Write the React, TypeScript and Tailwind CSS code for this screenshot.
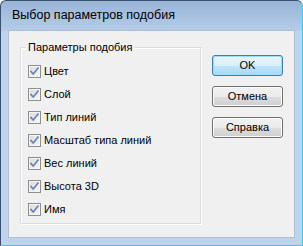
import React from "react";

const items = ["Цвет", "Слой", "Тип линий", "Масштаб типа линий", "Вес линий", "Высота 3D", "Имя"];

function Check() {
  return (
    <svg width="13" height="13" viewBox="0 0 13 13" className="shrink-0">
      <defs>
        <linearGradient id="cbg" x1="0" y1="0" x2="1" y2="1">
          <stop offset="0" stopColor="#dcdcdc" />
          <stop offset="1" stopColor="#f6f6f6" />
        </linearGradient>
      </defs>
      <rect x="0.5" y="0.5" width="12" height="12" fill="#f4f4f4" stroke="#8f8f8f" />
      <rect x="2" y="2" width="9" height="9" fill="url(#cbg)" />
      <path d="M3 6.5 L5.2 9 L10 3" fill="none" stroke="#6382bd" strokeWidth="1.6" strokeLinecap="square" />
    </svg>
  );
}

function Btn({ label, def }: { label: string; def?: boolean }) {
  return (
    <div
      className={
        "w-[71px] h-[21px] rounded-[3px] border flex items-center justify-center text-[11px] text-black " +
        (def
          ? "border-[#3c7fb1] bg-[linear-gradient(#eaf6fd_0%,#d9f0fc_50%,#bee6fd_51%,#a7d9f5_100%)] shadow-[inset_0_0_0_1px_#9ddcfb]"
          : "border-[#707070] bg-[linear-gradient(#f2f2f2_0%,#ebebeb_50%,#dddddd_51%,#cfcfcf_100%)] shadow-[inset_0_0_0_1px_#fcfcfc]")
      }
    >
      {label}
    </div>
  );
}

export default function App() {
  return (
    <div
      className="w-[303px] h-[246px] flex flex-col rounded-t-[6px] border border-[#38506e] border-r-[#2fd0ee] border-b-[#2fd0ee] bg-[linear-gradient(#98b4d6_0px,#b4cce8_29px,#bfd4ec_30px,#bfd4ec_100%)]"
      style={{ fontFamily: '"Liberation Sans", Tahoma, sans-serif' }}
    >
      <div className="h-[29px] flex items-center pl-[11px] text-[12.5px] text-black">
        Выбор параметров подобия
      </div>
      <div className="flex-1 mx-[7px] mb-[7px] bg-[#f0f0f0] border border-[#aebfd3] flex pl-[11px] pt-[10px]">
        <fieldset className="w-[181px] h-[183px] border border-[#d5dfe5] shadow-[1px_1px_0_#ffffff,inset_1px_1px_0_#ffffff] pl-[5px] pt-[6px]">
          <legend className="px-[2px] bg-[#f0f0f0] text-[11px] leading-[13px] text-black">Параметры подобия</legend>
          <div className="flex flex-col pl-[2px]">
            {items.map((t) => (
              <div key={t} className="h-[23px] flex items-center gap-[3px] text-[11px] text-black">
                <Check />
                <span>{t}</span>
              </div>
            ))}
          </div>
        </fieldset>
        <div className="flex flex-col gap-[10px] ml-[11px] mt-[14px]">
          <Btn label="OK" def />
          <Btn label="Отмена" />
          <Btn label="Справка" />
        </div>
      </div>
    </div>
  );
}
